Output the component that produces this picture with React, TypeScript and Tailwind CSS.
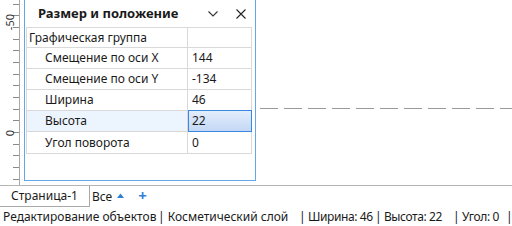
const rows = [
  { name: "Смещение по оси X", value: "144" },
  { name: "Смещение по оси Y", value: "-134" },
  { name: "Ширина", value: "46" },
  { name: "Высота", value: "22", selected: true },
  { name: "Угол поворота", value: "0" },
];

function Ruler() {
  const ticks: number[] = [];
  for (let i = 0; i < 16; i++) ticks.push(3.5 + i * 11.67);
  return (
    <div className="relative w-[20px] h-full border-r border-[#a8a8a8] bg-white">
      <svg width="20" height="185" className="absolute left-0 top-0">
        {ticks.map((y) => (
          <line key={y} x1="13" x2="19" y1={Math.round(y) + 0.5} y2={Math.round(y) + 0.5} stroke="#8a8a8a" strokeWidth="1" />
        ))}
      </svg>
      <span className="absolute left-[4px] top-[14px] text-[11px] leading-none text-[#333] [writing-mode:vertical-rl] rotate-180">-50</span>
      <span className="absolute left-[4px] top-[130px] text-[11px] leading-none text-[#333] [writing-mode:vertical-rl] rotate-180">0</span>
    </div>
  );
}

function SizePanel() {
  return (
    <div className="w-[232px] h-[181px] border-x border-b border-[#64a6e8] bg-white flex flex-col">
      {/* Заголовок */}
      <div className="h-[27px] flex items-center pl-[13px] pr-[9px]">
        <span className="flex-1 text-[13px] font-bold text-[#1a1a1a]">Размер и положение</span>
        <svg width="10" height="6" viewBox="0 0 10 6" className="mr-[18px]">
          <path d="M0.5 0.5 L5 5 L9.5 0.5" fill="none" stroke="#333" strokeWidth="1.1" />
        </svg>
        <svg width="10" height="10" viewBox="0 0 10 10">
          <path d="M0.5 0.5 L9.5 9.5 M9.5 0.5 L0.5 9.5" fill="none" stroke="#222" strokeWidth="1.1" />
        </svg>
      </div>

      {/* Таблица */}
      <div className="ml-[1px] w-[226px] border border-[#d9d9d9] text-[12px] text-[#1a1a1a]">
        <div className="flex h-[20px] border-b border-[#d9d9d9]">
          <div className="w-[161px] border-r border-[#d9d9d9] pl-[2px] flex items-center">Графическая группа</div>
          <div className="flex-1" />
        </div>
        {rows.map((r, i) => (
          <div
            key={r.name}
            className={`flex h-[21px] ${i < rows.length - 1 ? "border-b border-[#d9d9d9]" : ""} ${r.selected ? "bg-[#ecf4fd]" : ""}`}
          >
            <div className="w-[161px] border-r border-[#d9d9d9] pl-[18px] flex items-center">{r.name}</div>
            {r.selected ? (
              <div className="flex-1 -my-px -mr-px h-[22px] border border-[#3b88e0] bg-gradient-to-b from-[#e3edfc] to-[#c4d8f5] pl-[3px] flex items-center">
                {r.value}
              </div>
            ) : (
              <div className="flex-1 pl-[4px] flex items-center">{r.value}</div>
            )}
          </div>
        ))}
      </div>
    </div>
  );
}

export default function App() {
  return (
    <div className="w-[512px] h-[226px] overflow-hidden bg-white flex flex-col font-['Noto_Sans',sans-serif]">
      {/* Рабочая область */}
      <div className="h-[185px] flex">
        <Ruler />
        <div className="ml-[4px]">
          <SizePanel />
        </div>
        <div className="flex-1 pt-[108px] pl-[4px]">
          <div className="h-px w-full bg-[repeating-linear-gradient(to_right,#9a9a9a_0,#9a9a9a_18px,transparent_18px,transparent_24px)]" />
        </div>
      </div>

      {/* Вкладки страниц */}
      <div className="h-[22px] border-t border-[#b4b4b4] flex items-stretch text-[12px] text-[#1a1a1a]">
        <div className="w-[90px] border-r border-b border-[#a8a8a8] bg-white flex items-center justify-center">Страница-1</div>
        <div className="flex items-center pl-[2px]">
          <span>Все</span>
          <svg width="7" height="5" viewBox="0 0 7 5" className="ml-[5px] mt-[-2px]">
            <path d="M0 5 L3.5 0.5 L7 5 Z" fill="#2f7fd6" />
          </svg>
          <span className="ml-[14px] text-[#2f7fd6] font-bold text-[15px] leading-none mt-[-2px]">+</span>
        </div>
      </div>

      {/* Строка состояния */}
      <div className="h-[19px] flex items-center text-[12px] text-[#1a1a1a] whitespace-nowrap">
        <span className="w-[158px] pl-[3px] shrink-0">Редактирование объектов</span>
        <span className="w-[141px] shrink-0">| Косметический слой</span>
        <span className="w-[76px] shrink-0 tracking-[-0.4px]">| Ширина: 46</span>
        <span className="w-[78px] shrink-0 tracking-[-0.4px]">| Высота: 22</span>
        <span className="w-[53px] shrink-0 tracking-[-0.4px]">| Угол: 0</span>
        <span>|</span>
      </div>
    </div>
  );
}
